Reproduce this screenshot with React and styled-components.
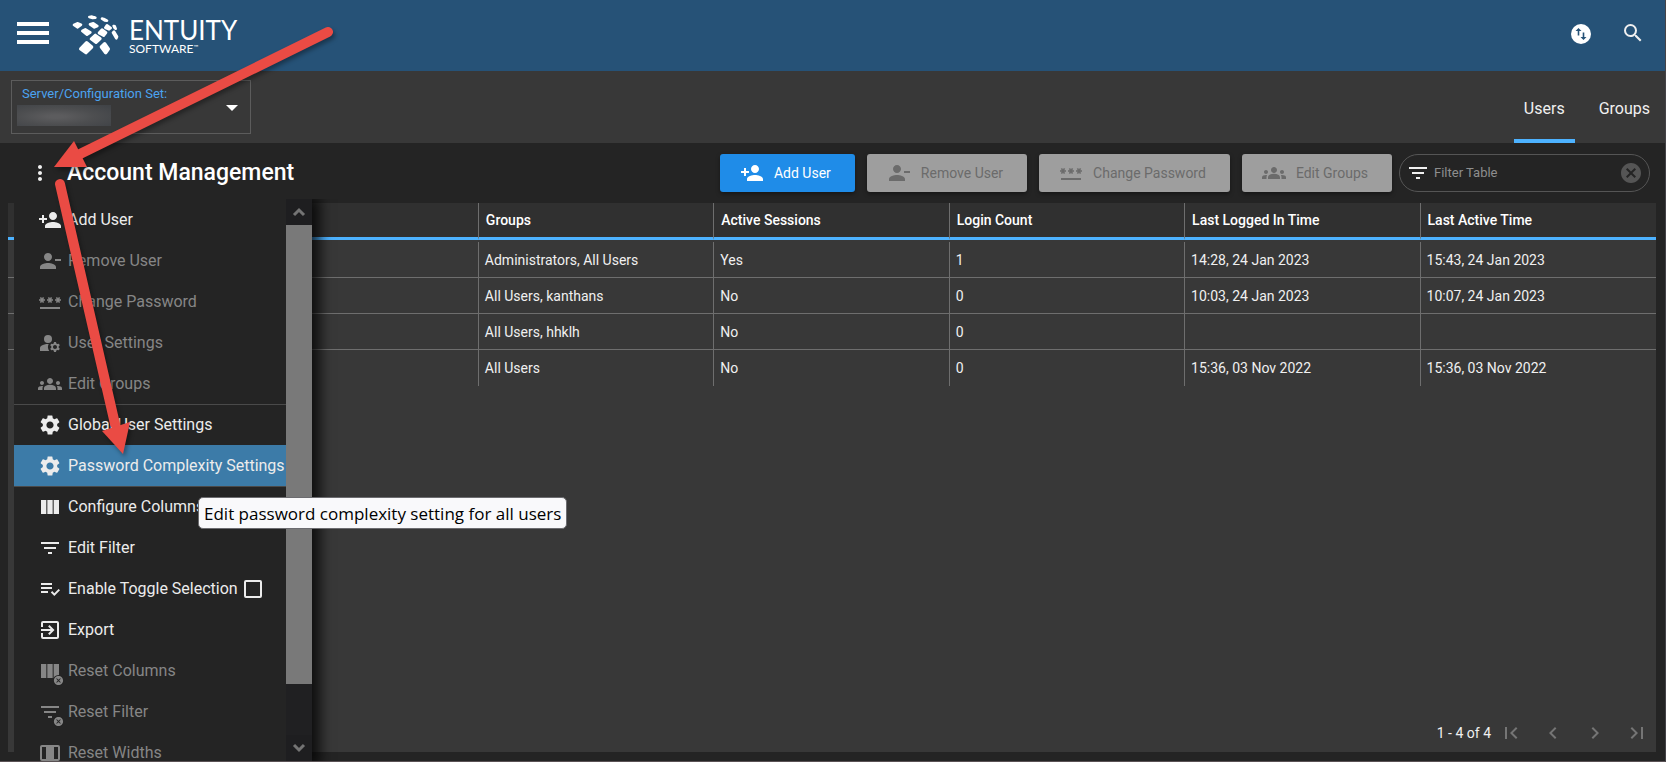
import React from "react";
import styled, { createGlobalStyle, css } from "styled-components";
import {
  MdPersonAdd,
  MdPersonRemove,
  MdPassword,
  MdManageAccounts,
  MdGroups,
  MdSettings,
  MdViewColumn,
  MdFilterList,
  MdPlaylistAddCheck,
  MdExitToApp,
  MdCancel,
  MdSearch,
  MdMoreVert,
  MdFirstPage,
  MdLastPage,
  MdChevronLeft,
  MdChevronRight,
} from "react-icons/md";

const GlobalStyle = createGlobalStyle`
  * { box-sizing: border-box; }
  body {
    margin: 0;
    background: #242424;
    color: #f0f0f0;
    font: 14px/20px Roboto, sans-serif;
  }
  button, input, select { font: inherit; color: inherit; margin: 0; }
  button { border: 0; padding: 0; background: none; cursor: pointer; }
  svg { display: block; flex: none; }
`;

const Page = styled.div`
  position: relative;
  display: flex;
  flex-direction: column;
  min-height: 100vh;
  overflow: hidden;
  background: #242424;
  border-right: 1px solid #454347;
  border-bottom: 1px solid #5a5255;
`;

/* ---------- top bar ---------- */

const TopBar = styled.header`
  display: flex;
  align-items: center;
  height: 71px;
  padding: 0 20px 6px 17px;
  background: #265277;
`;

const MenuToggle = styled.button`
  display: flex;
  flex-direction: column;
  gap: 5px;
  width: 32px;
`;

const MenuBar = styled.span`
  height: 4px;
  background: #fff;
`;

const Brand = styled.a`
  display: flex;
  align-items: center;
  gap: 10px;
  margin-left: 23px;
  padding-top: 4px;
  color: #fff;
  text-decoration: none;
  font-family: Lato, sans-serif;
`;

const BrandText = styled.span`
  display: flex;
  flex-direction: column;
  padding-top: 4px;
`;

const BrandName = styled.span`
  font-size: 26px;
  line-height: 24px;
`;

const BrandSub = styled.span`
  display: flex;
  font-size: 12px;
  line-height: 14px;
`;

const TradeMark = styled.span`
  font-size: 6px;
  line-height: 10px;
`;

const TopActions = styled.div`
  display: flex;
  align-items: center;
  gap: 28px;
  margin-left: auto;
`;

/* ---------- server strip and tabs ---------- */

const ContextBar = styled.div`
  display: flex;
  align-items: center;
  justify-content: space-between;
  height: 72px;
  padding: 0 5px 0 11px;
  background: #383838;
`;

const ServerBox = styled.div`
  display: flex;
  flex-direction: column;
  width: 240px;
  height: 54px;
  padding: 3px 5px;
  border: 1px solid #5c5c5c;
`;

const ServerLabel = styled.label`
  padding-left: 5px;
  font-size: 13px;
  line-height: 20px;
  color: #4ba3f0;
`;

const ServerPicker = styled.div`
  display: flex;
  align-items: flex-start;
  justify-content: space-between;
  padding: 1px 7px 0 0;
`;

const ServerSelect = styled.select`
  appearance: none;
  width: 94px;
  height: 21px;
  border: 0;
  background: radial-gradient(ellipse at 42% 55%, #5c5c5e 10%, #4d4e50 50%, #404347 95%);
`;

const Tabs = styled.nav`
  display: flex;
  align-self: stretch;
  gap: 14px;
`;

const Tab = styled.button`
  padding: 7px 10px 0;
  font-size: 16px;
  border-bottom: 4px solid ${(p) => (p.$active ? "#4db2ff" : "transparent")};
`;

/* ---------- page heading ---------- */

const Main = styled.main`
  position: relative;
  display: flex;
  flex: 1;
  flex-direction: column;
`;

const Heading = styled.div`
  display: flex;
  align-items: center;
  height: 60px;
  padding: 0 15px 0 28px;
`;

const Title = styled.h1`
  margin: 0 auto 0 15px;
  font-size: 23px;
  line-height: 28px;
  font-weight: 500;
  color: #fff;
`;

const Actions = styled.div`
  display: flex;
  gap: 12px;
  margin-right: 7px;
`;

const ActionButton = styled.button`
  display: flex;
  align-items: center;
  gap: 10px;
  height: 38px;
  padding: 0 24px 0 20px;
  border-radius: 3px;
  box-shadow: 0 2px 4px rgba(0, 0, 0, 0.4);
  background: #1f8ce8;
  color: #fff;

  &:disabled {
    background: #9e9e9e;
    color: #6b6b6b;
  }
`;

const FilterBox = styled.div`
  display: flex;
  align-items: center;
  width: 251px;
  height: 38px;
  padding: 0 6px 0 6px;
  border: 1px solid #555;
  border-radius: 19px;
`;

const FilterInput = styled.input`
  flex: 1;
  min-width: 0;
  padding: 0 0 0 4px;
  border: 0;
  outline: 0;
  background: none;
  font-size: 13px;

  &::placeholder { color: #8e8e8e; opacity: 1; }
`;

const ClearButton = styled.button`
  color: #555;
`;

/* ---------- table ---------- */

const Panel = styled.section`
  display: flex;
  flex: 1;
  flex-direction: column;
  margin: 0 9px 9px 8px;
  background: #383838;
`;

const Table = styled.table`
  width: 100%;
  table-layout: fixed;
  border-collapse: separate;
  border-spacing: 0;

  tbody::before {
    content: "";
    display: block;
    height: 2px;
  }
`;

const HeadCell = styled.th`
  height: 37px;
  padding: 0 7px;
  border-right: 1px solid #6e6e6e;
  border-bottom: 3px solid #4db2ff;
  background: #303030;
  font-weight: 500;
  text-align: left;
  color: #fff;

  &:last-child { border-right: 0; }
`;

const Cell = styled.td`
  height: 36px;
  padding: 0 6px;
  border-right: 1px solid #6e6e6e;
  border-bottom: 1px solid #6e6e6e;

  &:last-child { border-right: 0; }
  tr:last-child > & { border-bottom: 0; }
`;

const Pager = styled.div`
  display: flex;
  align-items: center;
  justify-content: flex-end;
  margin-top: auto;
  padding: 0 7px 7px;
`;

const PagerButtons = styled.div`
  display: flex;
  gap: 18px;
  margin-left: 8px;
  color: #757575;
`;

/* ---------- context menu ---------- */

const MenuPanel = styled.div`
  position: absolute;
  top: 56px;
  bottom: 0;
  left: 14px;
  display: flex;
  width: 298px;
  overflow: hidden;
  background: #242424;
`;

const MenuShadow = styled(MenuPanel)`
  box-shadow: 4px 2px 12px 4px rgba(0, 0, 0, 0.75);
  clip-path: inset(0 -30px 0 0);
`;

const MenuList = styled.div`
  flex: 1;
  display: flex;
  flex-direction: column;
`;

const itemStyles = css`
  display: flex;
  flex: none;
  align-items: center;
  gap: 6px;
  height: 41px;
  padding: 0 0 0 24px;
  border-top: ${(p) => (p.$divided ? "1px solid #4a4a4a" : "0")};
  background: ${(p) => (p.$active ? "#3c7ba8" : "none")};
  color: #ececec;
  font-size: 16px;
  text-align: left;
  white-space: nowrap;

  &:disabled { color: #868686; }
`;

const MenuItem = styled.button`
  ${itemStyles}
`;

const MenuCheckItem = styled.label`
  ${itemStyles}
`;

const CheckBox = styled.input`
  appearance: none;
  width: 18px;
  height: 18px;
  border: 2px solid #ececec;
  border-radius: 2px;
`;

const IconStack = styled.span`
  position: relative;
`;

const ResetBadge = styled(MdCancel)`
  position: absolute;
  right: -2px;
  bottom: -3px;
  border-radius: 50%;
  background: #242424;
`;

const ScrollBar = styled.div`
  display: flex;
  flex-direction: column;
  width: 26px;
  background: #202022;
`;

const ScrollArrow = styled.span`
  display: flex;
  align-items: center;
  justify-content: center;
  height: 26px;
  background: #1e1e20;
`;

const ScrollTrack = styled.span`
  flex: 1;
`;

const ScrollThumb = styled.span`
  display: block;
  height: 90%;
  background: #797979;
`;

const Tooltip = styled.div`
  position: absolute;
  top: 354px;
  left: 198px;
  padding: 4px 5px 3px;
  border: 1px solid #6c6c70;
  border-radius: 5px;
  background: #f9f9fb;
  color: #000;
  font: 17px/23px "Open Sans", sans-serif;
  white-space: nowrap;
`;

const Annotations = styled.svg`
  position: absolute;
  top: 0;
  left: 0;
  pointer-events: none;
  filter: drop-shadow(2px 3px 2px rgba(0, 0, 0, 0.35));
`;

/* ---------- drawings ---------- */

const Logo = () => (
  <svg width="47" height="41" viewBox="217 44 141 123" fill="#fff" stroke="#fff" strokeWidth="8" strokeLinejoin="round">
    <path d="M269 53L277 52L287 55L279 56Z" />
    <path d="M307 58L312 59L322 64L315 63Z" />
    <path d="M223 77L233 72L244 76L234 84Z" />
    <path d="M271 75L281 72L293 80L284 84Z" />
    <path d="M317 85L322 78L333 86L328 90Z" />
    <path d="M342 80L345 81L348 88L345 86Z" />
    <path d="M248 95L257 90L272 99L262 106Z" />
    <path d="M298 101L307 91L319 100L312 109Z" />
    <path d="M340 100L343 97L352 112L350 117Z" />
    <path d="M274 119L287 107L302 118L289 130Z" />
    <path strokeWidth="10" d="M243 149L261 130L276 143L259 160Z" />
    <path strokeWidth="10" d="M305 143L315 133L326 149L318 160Z" />
  </svg>
);

const TransferIcon = () => (
  <svg width="24" height="24" viewBox="0 0 24 24">
    <circle cx="12" cy="13" r="10" fill="#fff" />
    <path d="M9.500 7L12.500 10H10.300V14.500H8.700V10H6.500ZM14.500 19L11.500 16H13.700V11.500H15.300V16H17.500Z" fill="#265277" />
  </svg>
);

const WidthsIcon = () => (
  <svg width="24" height="24" viewBox="0 0 24 24">
    <path
      fillRule="evenodd"
      fill="currentColor"
      d="M4 4H20Q22 4 22 6V18Q22 20 20 20H4Q2 20 2 18V6Q2 4 4 4ZM4 6V18H8V6ZM16 6V18H20V6Z"
    />
  </svg>
);

const ScrollChevron = ({ down }) => (
  <svg width="14" height="12" viewBox="0 0 14 12">
    <path d={down ? "M2 3L7 8L12 3" : "M2 9L7 4L12 9"} fill="none" stroke="#747474" strokeWidth="3" />
  </svg>
);

const withReset = (Icon) => () => (
  <IconStack>
    <Icon size={24} />
    <ResetBadge size={11} />
  </IconStack>
);

const ResetColumnsIcon = withReset(MdViewColumn);
const ResetFilterIcon = withReset(MdFilterList);

/* ---------- data ---------- */

const actions = [
  { label: "Add User", icon: MdPersonAdd },
  { label: "Remove User", icon: MdPersonRemove, disabled: true },
  { label: "Change Password", icon: MdPassword, disabled: true },
  { label: "Edit Groups", icon: MdGroups, disabled: true },
];

const menuItems = [
  { label: "Add User", icon: MdPersonAdd },
  { label: "Remove User", icon: MdPersonRemove, disabled: true },
  { label: "Change Password", icon: MdPassword, disabled: true },
  { label: "User Settings", icon: MdManageAccounts, disabled: true },
  { label: "Edit Groups", icon: MdGroups, disabled: true },
  { label: "Global User Settings", icon: MdSettings, divided: true },
  { label: "Password Complexity Settings", icon: MdSettings, active: true },
  { label: "Configure Columns", icon: MdViewColumn, divided: true },
  { label: "Edit Filter", icon: MdFilterList },
  { label: "Enable Toggle Selection", icon: MdPlaylistAddCheck, check: true },
  { label: "Export", icon: MdExitToApp },
  { label: "Reset Columns", icon: ResetColumnsIcon, disabled: true },
  { label: "Reset Filter", icon: ResetFilterIcon, disabled: true },
  { label: "Reset Widths", icon: WidthsIcon, disabled: true },
];

const columns = ["", "", "Groups", "Active Sessions", "Login Count", "Last Logged In Time", "Last Active Time"];

const rows = [
  ["", "", "Administrators, All Users", "Yes", "1", "14:28, 24 Jan 2023", "15:43, 24 Jan 2023"],
  ["", "", "All Users, kanthans", "No", "0", "10:03, 24 Jan 2023", "10:07, 24 Jan 2023"],
  ["", "", "All Users, hhklh", "No", "0", "", ""],
  ["", "", "All Users", "No", "0", "15:36, 03 Nov 2022", "15:36, 03 Nov 2022"],
];

const pagerButtons = [
  { label: "First page", icon: MdFirstPage },
  { label: "Previous page", icon: MdChevronLeft },
  { label: "Next page", icon: MdChevronRight },
  { label: "Last page", icon: MdLastPage },
];

export default function App() {
  return (
    <>
      <GlobalStyle />
      <Page>
        <TopBar>
          <MenuToggle aria-label="Main menu">
            <MenuBar />
            <MenuBar />
            <MenuBar />
          </MenuToggle>
          <Brand href="#">
            <Logo />
            <BrandText>
              <BrandName>ENTUITY</BrandName>
              <BrandSub>
                SOFTWARE<TradeMark>™</TradeMark>
              </BrandSub>
            </BrandText>
          </Brand>
          <TopActions>
            <button aria-label="Transfers">
              <TransferIcon />
            </button>
            <button aria-label="Search">
              <MdSearch size={24} />
            </button>
          </TopActions>
        </TopBar>

        <ContextBar>
          <ServerBox>
            <ServerLabel htmlFor="server">Server/Configuration Set:</ServerLabel>
            <ServerPicker>
              <ServerSelect id="server" />
              <svg width="12" height="6" viewBox="0 0 12 6">
                <path d="M0 0H12L6 6Z" fill="#fff" />
              </svg>
            </ServerPicker>
          </ServerBox>
          <Tabs>
            <Tab $active>Users</Tab>
            <Tab>Groups</Tab>
          </Tabs>
        </ContextBar>

        <Main>
          <Heading>
            <button aria-label="Account menu">
              <MdMoreVert size={24} />
            </button>
            <Title>Account Management</Title>
            <Actions>
              {actions.map(({ label, icon: Icon, disabled }) => (
                <ActionButton key={label} disabled={disabled}>
                  <Icon size={24} />
                  {label}
                </ActionButton>
              ))}
            </Actions>
            <FilterBox>
              <MdFilterList size={24} />
              <FilterInput aria-label="Filter Table" placeholder="Filter Table" />
              <ClearButton aria-label="Clear filter">
                <MdCancel size={24} />
              </ClearButton>
            </FilterBox>
          </Heading>

          <Panel>
            <Table>
              <thead>
                <tr>
                  {columns.map((name, i) => (
                    <HeadCell key={i}>{name}</HeadCell>
                  ))}
                </tr>
              </thead>
              <tbody>
                {rows.map((row, r) => (
                  <tr key={r}>
                    {row.map((value, i) => (
                      <Cell key={i}>{value}</Cell>
                    ))}
                  </tr>
                ))}
              </tbody>
            </Table>
            <Pager>
              1 - 4 of 4
              <PagerButtons>
                {pagerButtons.map(({ label, icon: Icon }) => (
                  <button key={label} aria-label={label}>
                    <Icon size={24} />
                  </button>
                ))}
              </PagerButtons>
            </Pager>
          </Panel>

          <MenuShadow aria-hidden="true" />
          <MenuPanel>
            <MenuList>
              {menuItems.map(({ label, icon: Icon, disabled, divided, active, check }) =>
                check ? (
                  <MenuCheckItem key={label}>
                    <Icon size={24} />
                    {label}
                    <CheckBox type="checkbox" />
                  </MenuCheckItem>
                ) : (
                  <MenuItem key={label} disabled={disabled} $divided={divided} $active={active}>
                    <Icon size={24} />
                    {label}
                  </MenuItem>
                )
              )}
            </MenuList>
            <ScrollBar aria-hidden="true">
              <ScrollArrow>
                <ScrollChevron />
              </ScrollArrow>
              <ScrollTrack>
                <ScrollThumb />
              </ScrollTrack>
              <ScrollArrow>
                <ScrollChevron down />
              </ScrollArrow>
            </ScrollBar>
          </MenuPanel>
          <Tooltip role="tooltip">Edit password complexity setting for all users</Tooltip>
        </Main>

        <Annotations width="340" height="470" viewBox="0 0 340 470" fill="#ea4b44" aria-hidden="true">
          <path d="M328 32L78 155" stroke="#ea4b44" strokeWidth="10" strokeLinecap="round" />
          <path d="M54 167L74 141L87 167Z" />
          <path d="M60 184L115 424" stroke="#ea4b44" strokeWidth="10" strokeLinecap="round" />
          <path d="M123 454L102 431L130 422Z" />
        </Annotations>
      </Page>
    </>
  );
}
